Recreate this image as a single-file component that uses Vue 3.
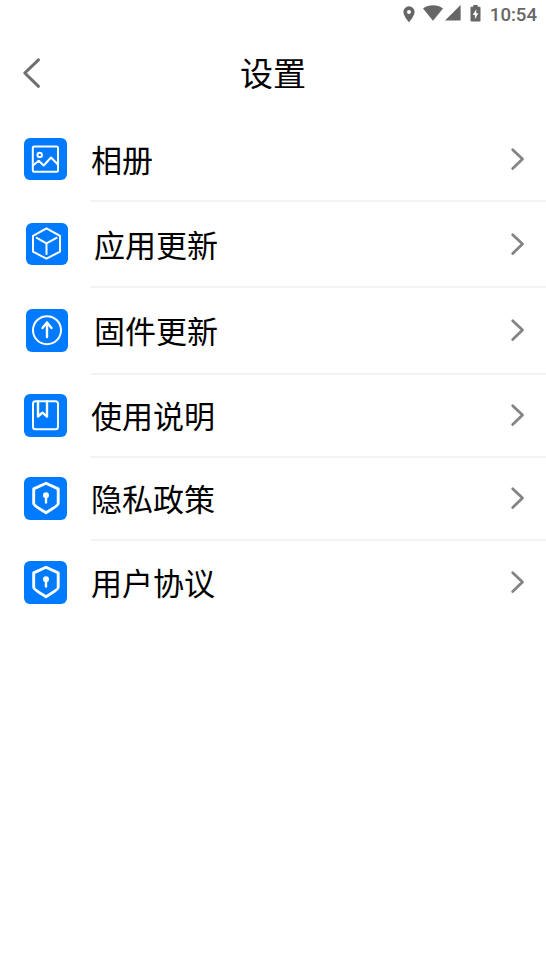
<script setup>
const rows = [
  { label: '相册', icon: 'photo', height: 84 },
  { label: '应用更新', icon: 'cube', height: 86, inset: true },
  { label: '固件更新', icon: 'upload', height: 87, inset: true },
  { label: '使用说明', icon: 'book', height: 83 },
  { label: '隐私政策', icon: 'shield', height: 83 },
  { label: '用户协议', icon: 'shield', height: 85 },
]
</script>

<template>
  <div class="screen">
    <div class="status">
      <svg class="pin" width="12" height="17" viewBox="0 0 12 17">
        <path fill-rule="evenodd" d="M6 .3A5.6 5.6 0 0 0 .4 5.9C.4 10 6 16.2 6 16.2S11.600 10 11.600 5.900A5.600 5.600 0 0 0 6 .3ZM6 3.900a2 2 0 1 1 0 4a2 2 0 0 1 0-4Z" />
      </svg>
      <svg class="wifi" width="20" height="16" viewBox="0 0 20 16">
        <path d="M0 3.500C5.800-.9 14.200-.9 20 3.500L10 15.700Z" />
      </svg>
      <svg class="signal" width="16" height="16" viewBox="0 0 16 16"><path d="M15.600 0V15.500H0Z" /></svg>
      <svg class="battery" width="11" height="17" viewBox="0 0 11 17">
        <path fill-rule="evenodd" d="M3.300 0H7.700V1.800H9.500Q10.500 1.800 10.500 2.800V15.500Q10.500 16.500 9.500 16.500H1.500Q.5 16.500 .5 15.500V2.800Q.5 1.800 1.500 1.800H3.300ZM6.300 4.300L2.700 10H4.900V14.200L8.400 8.200H6.300Z" />
      </svg>
      <span class="time">10:54</span>
    </div>

    <header class="header">
      <svg class="back" width="20" height="32" viewBox="0 0 20 32"><path d="M16.500 2.900L2.800 16L16.500 29.300" /></svg>
      <h1>设置</h1>
    </header>

    <ul class="list">
      <li v-for="row in rows" :key="row.label" class="row" :class="{ inset: row.inset }" :style="{ height: row.height + 'px' }">
        <span class="tile">
          <svg width="43" height="43" viewBox="0 0 43 43">
            <g v-if="row.icon === 'photo'">
              <rect x="8.800" y="8.500" width="25.200" height="25.200" rx="1.500" />
              <circle cx="15.700" cy="16.900" r="2.200" />
              <path d="M8.900 27.500L14.700 22.700L19.700 27.500L27 19.500L33.900 26.500" />
            </g>
            <g v-else-if="row.icon === 'cube'">
              <path d="M20.500 5.300L34 12.800V28.700L20.500 35.700L7 28.700V12.800Z" />
              <path d="M10.700 14.900L20.500 20.400L30.500 14.900M20.500 20.400V31" />
            </g>
            <g v-else-if="row.icon === 'upload'">
              <circle cx="21" cy="21.200" r="14" />
              <path class="bold" d="M21 28V13.500M16.500 19L21 13.500L25.500 19" />
            </g>
            <g v-else-if="row.icon === 'book'">
              <rect x="9" y="7.300" width="25" height="28" rx="2.500" />
              <path class="bold" d="M14 7.500V22.500L18.500 18.700L23 22.500V7.500" />
            </g>
            <g v-else>
              <path class="thick" d="M22 6.200L34.200 11.900V26.500Q34.200 28.500 22 35.700Q9.700 28.500 9.700 26.500V11.900Z" />
              <circle class="solid" cx="22" cy="18.200" r="3" />
              <path class="bold" d="M22 18.500V25.600" />
            </g>
          </svg>
        </span>
        <div class="content">
          <span class="label">{{ row.label }}</span>
          <svg class="chevron" width="16" height="24" viewBox="0 0 16 24"><path d="M2.700 2.700L12.500 12L2.700 21.500" /></svg>
        </div>
      </li>
    </ul>
  </div>
</template>

<style>
body {
  background: #fff;
}
</style>

<style scoped>
.screen {
  width: 546px;
  height: 970px;
  background: #fff;
  color: #000;
  font-family: "Noto Sans CJK SC", sans-serif;
  overflow: hidden;
}
.status {
  display: flex;
  align-items: flex-start;
  justify-content: flex-end;
  height: 29px;
  padding: 5px 9px 0 0;
  box-sizing: border-box;
  fill: #666;
}
.pin { margin: 1px 8px 0 0; }
.wifi { margin-right: 2px; }
.signal { margin-right: 9px; }
.battery { margin-right: 9px; }
.time {
  padding-top: 1px;
  font: 500 18.600px/19px Roboto, sans-serif;
  color: #666;
}
.header {
  display: grid;
  grid-template-columns: 120px 1fr 120px;
  align-items: center;
  height: 89px;
}
.back {
  margin: 0 0 2px 22px;
  fill: none;
  stroke: #6f6f6f;
  stroke-width: 3;
  stroke-linecap: round;
  stroke-linejoin: round;
}
h1 {
  margin: 0 0 3px;
  font-size: 33px;
  line-height: 48px;
  font-weight: 400;
  text-align: center;
}
.list {
  margin: 0;
  padding: 0;
  list-style: none;
}
.row {
  display: flex;
  align-items: center;
  padding-left: 24px;
  box-sizing: border-box;
}
.tile {
  display: flex;
  width: 43px;
  height: 42.500px;
  margin: 0 24px 2px 0;
  border-radius: 6px;
  background: #007aff;
}
.inset .tile {
  width: 42px;
  margin-left: 2px;
  margin-right: 23px;
}
.inset .label {
  padding-left: 3px;
}
.tile svg {
  flex: none;
  fill: none;
  stroke: #fff;
  stroke-width: 2;
  stroke-linecap: round;
  stroke-linejoin: round;
}
.tile .bold { stroke-width: 2.400; }
.tile .thick { stroke-width: 2.900; }
.tile .solid { fill: #fff; stroke: none; }
.content {
  display: flex;
  flex: 1;
  align-items: center;
  justify-content: space-between;
  height: 100%;
  padding-right: 20px;
  box-sizing: border-box;
  border-bottom: 2px solid #f2f3f5;
}
.row:last-child .content { border-bottom-color: transparent; }
.label {
  padding-bottom: 1px;
  font-size: 31px;
  line-height: 44px;
}
.chevron {
  margin-bottom: 1px;
  fill: none;
  stroke: #848484;
  stroke-width: 2.800;
  stroke-linecap: round;
  stroke-linejoin: round;
}
</style>
